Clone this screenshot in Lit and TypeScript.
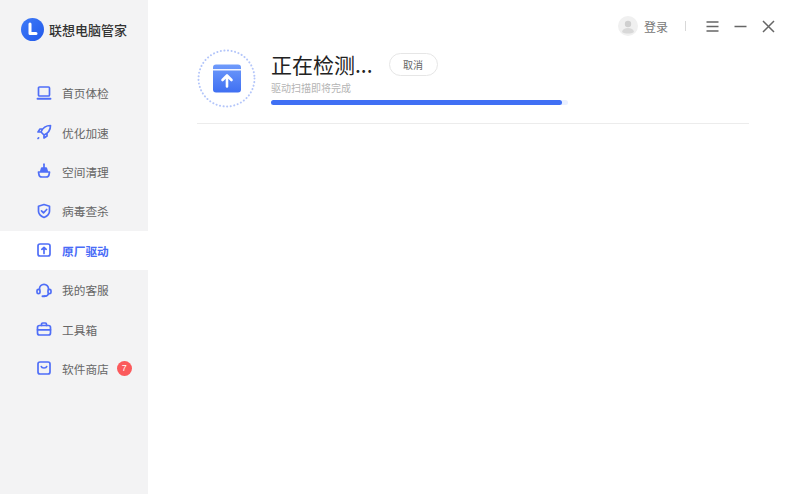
import { LitElement, html, css, svg } from "lit";
import { customElement } from "lit/decorators.js";

const ic = (body: any) => html`<svg class="ico" viewBox="0 0 16 16" fill="none" stroke="#4f6ef7" stroke-width="1.700" stroke-linecap="round" stroke-linejoin="round">${body}</svg>`;

const items: { label: string; icon: any; active?: boolean; badge?: string }[] = [
  { label: "首页体检", icon: ic(svg`<rect x="2.500" y="2" width="11" height="9" rx="1"/><path d="M1.500 13.800h13" stroke-width="1.900"/>`) },
  { label: "优化加速", icon: ic(svg`<path d="M14.500 1.500c-4.500 0-7.500 1.800-9.500 6.500l3 3c4.700-2 6.500-5 6.500-9.500zM5 8H2l2-3h2.500M8 11v3l3-2v-2.500"/><path d="M2 14.500l.6-.6"/>`) },
  { label: "空间清理", icon: ic(svg`<path d="M8 1.200v3.600"/><path d="M5.800 5h4.400l1 3.200H4.800z" fill="#4f6ef7"/><path d="M2.500 9h11l-.4 2.300a3 3 0 0 1-3 2.700H5.900a3 3 0 0 1-3-2.700z"/>`) },
  { label: "病毒查杀", icon: ic(svg`<path d="M8 1.500l5.500 1.800v5c0 3-2.500 5-5.500 6.200-3-1.200-5.500-3.200-5.500-6.200v-5z"/><path d="M5.500 7.800l2 2 3.200-3.300"/>`) },
  { label: "原厂驱动", active: true, icon: ic(svg`<rect x="2" y="2" width="12" height="12" rx="2"/><path d="M8 11.500V5.500M5.800 7.300L8 5.300l2.200 2"/>`) },
  { label: "我的客服", icon: ic(svg`<path d="M3.500 7.500V6.800a4.500 4.500 0 0 1 9 0v.7"/><rect x="1" y="7.300" width="3" height="4.400" rx="1.500"/><rect x="12" y="7.300" width="3" height="4.400" rx="1.500"/><path d="M12.500 11.700c-.5 1.500-2 2.500-4 2.500" /><path d="M6.500 14.200h2" stroke-width="2"/>`) },
  { label: "工具箱", icon: ic(svg`<rect x="1.500" y="4.500" width="13" height="9.500" rx="2"/><path d="M5.500 4.500V3.200c0-.7.500-1.200 1.200-1.200h2.600c.7 0 1.200.500 1.200 1.200v1.300M1.500 8.800h13"/>`) },
  { label: "软件商店", badge: "7", icon: ic(svg`<rect x="2" y="2" width="12" height="12" rx="2"/><path d="M5.300 6.500C5.800 8.500 10.200 8.500 10.700 6.500"/>`) },
];

@customElement("app-root")
export class AppRoot extends LitElement {
  static styles = css`
    :host { display: block; width: 798px; height: 494px; overflow: hidden; background: #fff;
      font-family: "Noto Sans CJK SC", "Liberation Sans", sans-serif; }
    .app { display: flex; width: 100%; height: 100%; }
    .side { width: 148px; flex: none; background: #f3f3f4; display: flex; flex-direction: column; }
    .logo { display: flex; align-items: center; gap: 5px; height: 59px; padding-left: 21px; font-size: 13px; font-weight: 500; color: #333; }
    .nav { display: flex; flex-direction: column; margin-top: 14px; }
    .row { height: 39.400px; display: flex; align-items: center; padding-left: 36px; gap: 10px; font-size: 11.700px; color: #666; }
    .row.on { background: #fff; color: #4a6cf7; font-weight: 700; }
    .ico { width: 16px; height: 16px; flex: none; }
    .badge { width: 15px; height: 15px; border-radius: 50%; background: #fb5a5c; color: #fff; font-size: 9px; margin-left: -2px;
      display: flex; align-items: center; justify-content: center; font-family: "Liberation Sans", sans-serif; }
    .main { flex: 1; min-width: 0; display: flex; flex-direction: column; padding: 0 49px; }
    .top { height: 49px; box-sizing: border-box; padding: 3px 22px 0 0; margin-right: -49px; display: flex; align-items: center; justify-content: flex-end; color: #777; font-size: 12px; }
    .user { display: flex; align-items: center; gap: 6px; color: #777; }
    .sep { width: 1px; height: 10px; background: #d8d8d8; margin: 0 19px 0 17px; }
    .ctl { display: flex; align-items: center; gap: 13px; }
    .ctl svg { width: 15px; height: 15px; display: block; }
    .head { display: flex; align-items: flex-start; gap: 15px; height: 75px; box-sizing: border-box; border-bottom: 1px solid #ececec; }
    .ring { width: 59px; height: 59px; flex: none; display: block; }
    .info { flex: none; width: 297px; display: flex; flex-direction: column; }
    .title { display: flex; align-items: center; gap: 16px; height: 30px; }
    h1 { margin: 0; font-size: 21px; font-weight: 400; line-height: 30px; color: #222; }
    button { width: 49px; height: 23px; border: 1px solid #e6e6e6; border-radius: 12px; background: #fff; color: #666; font: inherit; font-size: 10px; padding: 0; }
    .sub { font-size: 10px; line-height: 14px; color: #b4b4b4; margin-top: 2px; }
    .track { height: 5px; background: #eaf0ff; border-radius: 3px; margin-top: 5px; }
    .fill { height: 100%; width: 98%; background: #4070f4; border-radius: 3px; }
  `;

  render() {
    return html`<div class="app">
      <aside class="side">
        <div class="logo">
          <svg width="23" height="23" viewBox="0 0 23 23" style="flex:none">
            <defs><linearGradient id="lg" x1="0" y1="0" x2="1" y2="1"><stop offset="0" stop-color="#3f7bf8"/><stop offset="1" stop-color="#2159ea"/></linearGradient></defs>
            <circle cx="11.500" cy="11.500" r="11.500" fill="url(#lg)"/>
            <path d="M9 6v9.500h6" fill="none" stroke="#fff" stroke-width="3" stroke-linecap="round" stroke-linejoin="round"/>
          </svg>
          <span>联想电脑管家</span>
        </div>
        <nav class="nav">
          ${items.map((i) => html`<div class="row ${i.active ? "on" : ""}">${i.icon}<span>${i.label}</span>${i.badge ? html`<span class="badge">${i.badge}</span>` : ""}</div>`)}
        </nav>
      </aside>
      <main class="main">
        <div class="top">
          <div class="user">
            <svg width="20" height="20" viewBox="0 0 20 20"><circle cx="10" cy="10" r="10" fill="#f0f0f0"/><circle cx="10" cy="8" r="3.200" fill="#cfcfcf"/><path d="M4 16c.5-3 3-4 6-4s5.500 1 6 4c-3 2-9 2-12 0z" fill="#d8d8d8"/></svg>
            <span>登录</span>
          </div>
          <div class="sep"></div>
          <div class="ctl">
            <svg viewBox="0 0 15 15" stroke="#666" stroke-width="1.400" fill="none"><path d="M1.500 3h12M1.500 7.500h12M1.500 12h12"/></svg>
            <svg viewBox="0 0 15 15" stroke="#666" stroke-width="1.500" fill="none"><path d="M1.500 7.500h12"/></svg>
            <svg viewBox="0 0 15 15" stroke="#666" stroke-width="1.500" fill="none"><path d="M2 2l11 11M13 2L2 13"/></svg>
          </div>
        </div>
        <section class="head">
          <svg class="ring" viewBox="0 0 59 59">
            <defs><linearGradient id="bx" x1="0" y1="0" x2="0" y2="1"><stop offset="0" stop-color="#6f9bfb"/><stop offset="1" stop-color="#3f6ff2"/></linearGradient></defs>
            <circle cx="29.500" cy="29.500" r="28" fill="none" stroke="#b4c6fa" stroke-width="2" stroke-linecap="round" stroke-dasharray="0.100 3.500"/>
            <rect x="16" y="15.500" width="28" height="28" rx="3" fill="url(#bx)"/>
            <rect x="16" y="20" width="28" height="1.500" fill="#fff" opacity="0.900"/>
            <path d="M30 37.500v-10M25.500 31l4.500-4.500 4.500 4.500" fill="none" stroke="#fff" stroke-width="2.600" stroke-linecap="round" stroke-linejoin="round"/>
          </svg>
          <div class="info">
            <div class="title"><h1>正在检测...</h1><button>取消</button></div>
            <div class="sub">驱动扫描即将完成</div>
            <div class="track"><div class="fill"></div></div>
          </div>
        </section>
      </main>
    </div>`;
  }
}
